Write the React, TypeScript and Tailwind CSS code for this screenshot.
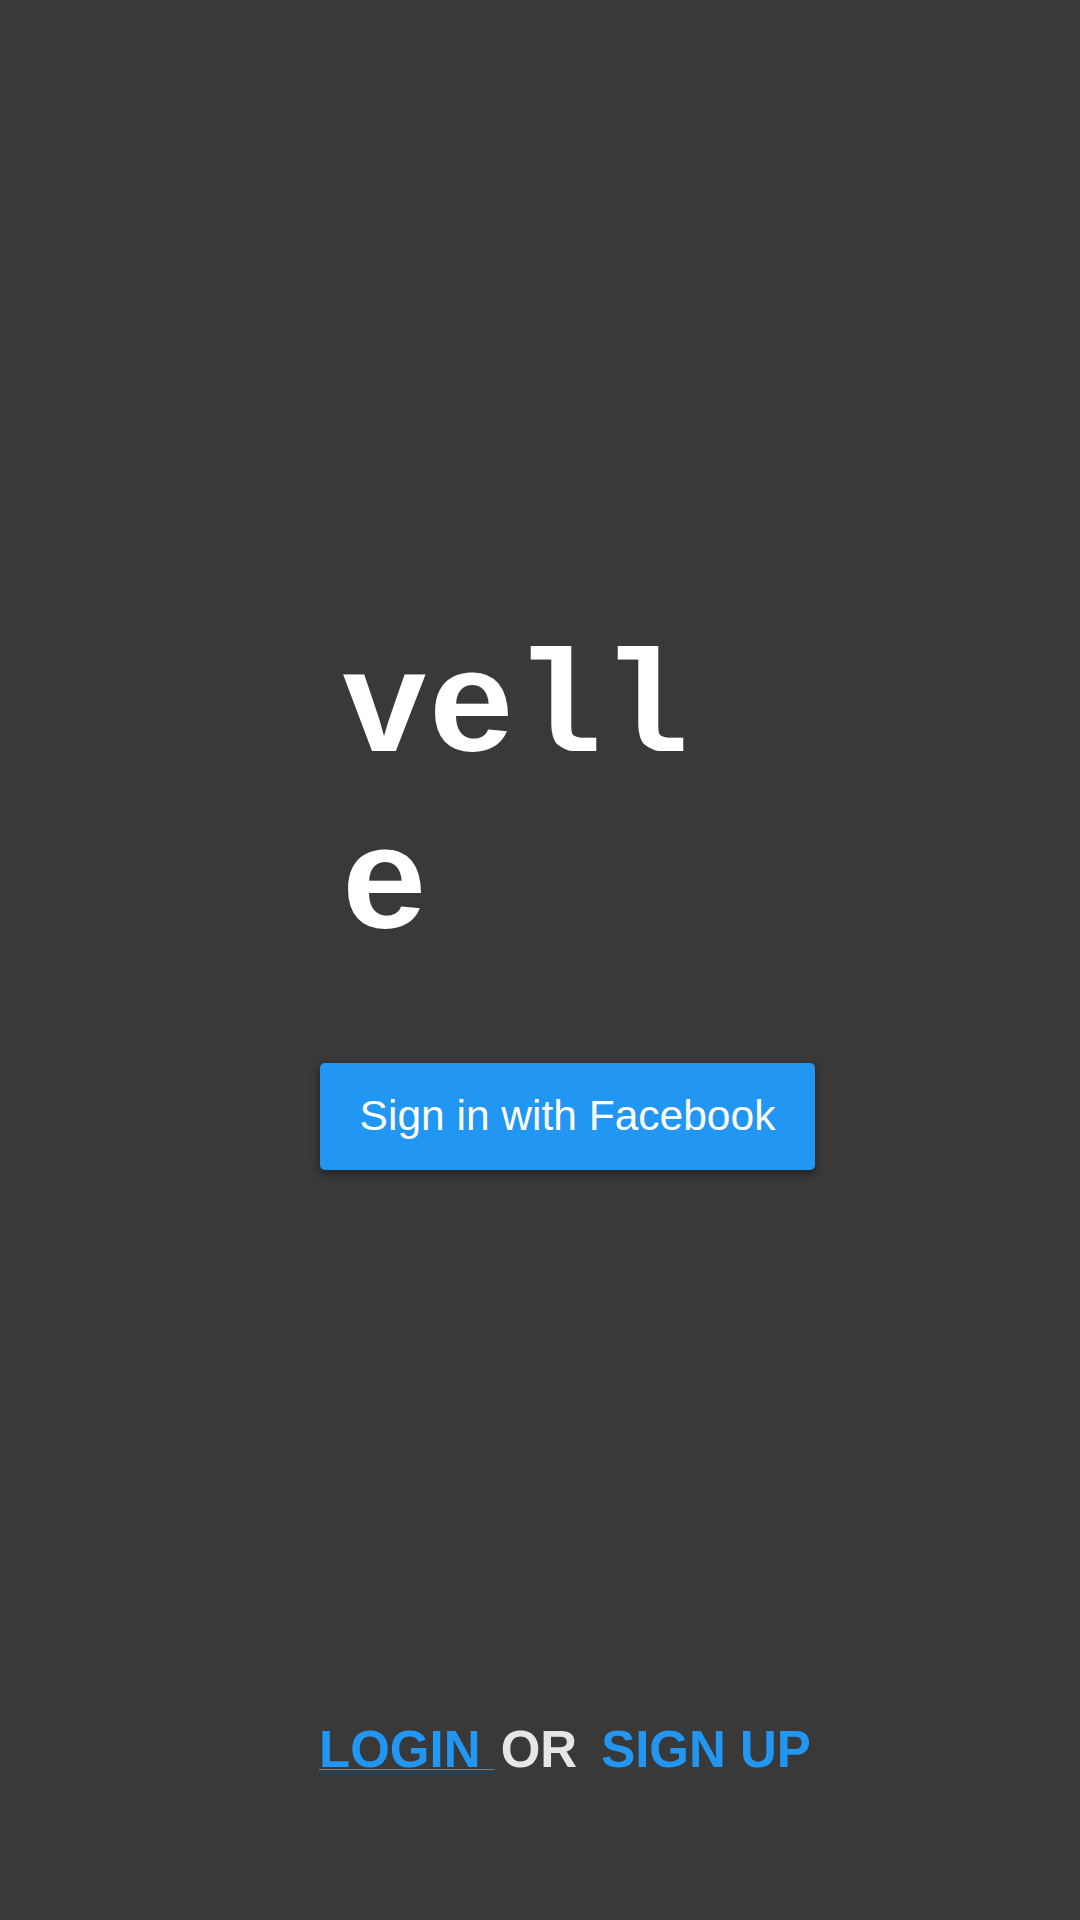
import React from 'react';

export default function App() {
  return (
    <main className="min-h-screen w-full bg-[#393939] flex flex-col pl-[320px]">
      {/* Logo */}
      <h1 className="mt-[624px] ml-[21px] w-[400px] break-all text-white font-bold text-[145px] leading-[177px] [font-family:'Liberation_Mono','Courier_New',monospace]">
        velle
      </h1>

      {/* Facebook button */}
      <button className="mt-[85px] w-[495px] h-[107px] rounded-[5px] bg-[#2196f3] text-white text-[42.5px] leading-none shadow-[0_3px_8px_rgba(0,0,0,0.45)] [font-family:'Liberation_Sans',Arial,sans-serif]">
        Sign in with Facebook
      </button>

      {/* Footer links */}
      <div className="mt-[552px] flex items-baseline font-bold text-[51px] leading-[56px] [font-family:'Liberation_Sans',Arial,sans-serif]">
        <a className="-ml-[1px] text-[#2196f3] underline decoration-1 underline-offset-[2px] whitespace-pre">LOGIN </a>
        <span className="ml-[6px] text-[#e6e6e6]">OR</span>
        <a className="ml-[24px] text-[#2196f3]">SIGN UP</a>
      </div>
    </main>
  );
}
